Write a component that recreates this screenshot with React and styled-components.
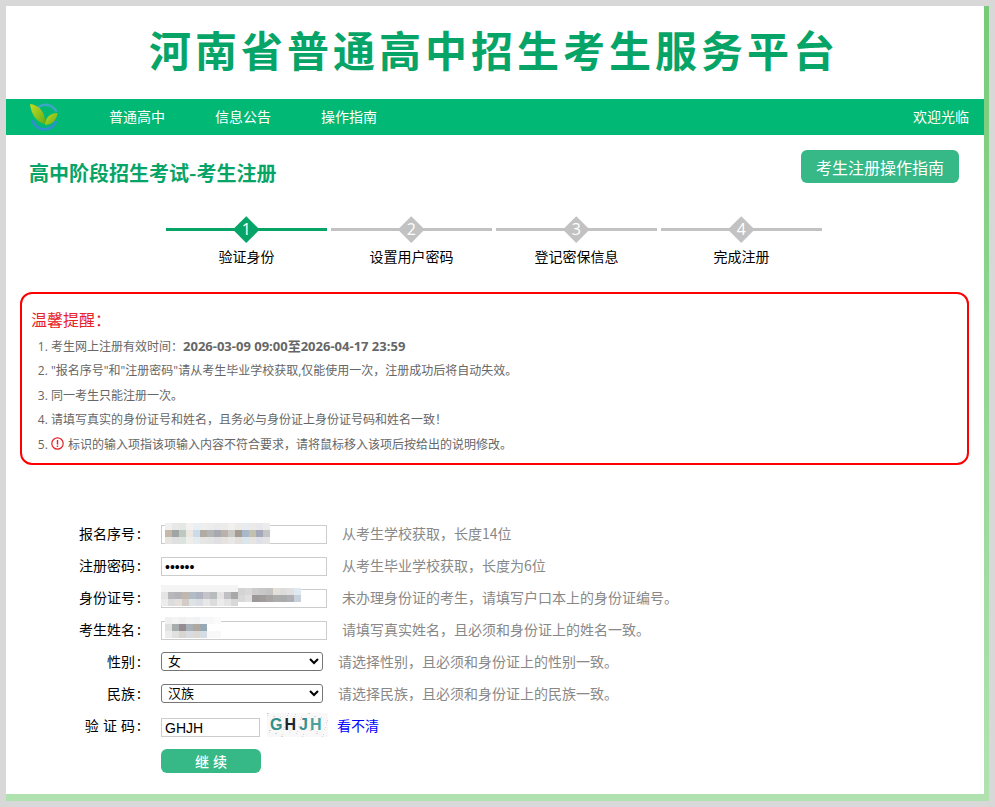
import styled, { createGlobalStyle } from "styled-components";

const GlobalStyle = createGlobalStyle`
  html, body {
    margin: 0;
    padding: 0;
    background: #d8d8d8;
  }
  body {
    font-family: "Open Sans", "Noto Sans CJK SC", sans-serif;
    color: #000;
  }
  * {
    box-sizing: border-box;
  }
`;

const Page = styled.div`
  padding: 6px 6px 6px 6px;
  height: 807px;
  overflow: hidden;
`;

const Frame = styled.div`
  width: 983px;
  height: 795px;
  background: #fff;
  border-right: 5px solid #7ccc7c;
  border-bottom: 7px solid #aee0ae;
  border-image: linear-gradient(#76cb76, #b0e2b0) 1;
`;

const Banner = styled.h1`
  margin: 0;
  height: 93px;
  padding: 0 2px 8px 0;
  display: flex;
  align-items: center;
  justify-content: center;
  font-family: "Noto Sans CJK SC", sans-serif;
  font-size: 42px;
  font-weight: 700;
  letter-spacing: 4px;
  color: #07a468;
`;

const Nav = styled.nav`
  height: 36px;
  background: #02b875;
  display: flex;
  align-items: center;
  padding: 0 15px 0 23px;
  color: #fff;
  font-size: 14px;
  font-family: "Noto Sans CJK SC", sans-serif;
`;

const NavLinks = styled.div`
  display: flex;
  gap: 50px;
  margin: 0 0 2px 50px;
  flex: 1;
`;

const Welcome = styled.span`
  margin-bottom: 2px;
`;

const TitleRow = styled.div`
  height: 48px;
  display: flex;
  justify-content: space-between;
  align-items: flex-start;
  padding: 15px 25px 0 23px;
`;

const PageTitle = styled.h2`
  margin: 8px 0 0;
  font-size: 20px;
  line-height: 30px;
  font-weight: 700;
  color: #07a468;
  font-family: "Noto Sans CJK SC", sans-serif;
`;

const GuideButton = styled.a`
  width: 158px;
  height: 33px;
  display: flex;
  align-items: center;
  justify-content: center;
  background: #36b887;
  border-radius: 6px;
  color: #fff;
  font-size: 16px;
  font-family: "Noto Sans CJK SC", sans-serif;
`;

const Steps = styled.div`
  display: flex;
  gap: 4px;
  margin: 33px 0 0 160px;
`;

const Step = styled.div`
  width: 161px;
  display: flex;
  flex-direction: column;
  align-items: center;
`;

const Track = styled.div`
  position: relative;
  width: 100%;
  height: 27px;
  display: flex;
  align-items: center;
  justify-content: center;
  &::before {
    content: "";
    position: absolute;
    left: 0;
    right: 0;
    top: 12px;
    height: 3px;
    background: ${(p) => (p.$active ? "#07a468" : "#c2c2c2")};
  }
`;

const Diamond = styled.div`
  position: relative;
  width: 18.5px;
  height: 18.5px;
  transform: rotate(45deg);
  background: ${(p) => (p.$active ? "#07a468" : "#c2c2c2")};
`;

const StepNumber = styled.span`
  position: absolute;
  inset: 0;
  display: flex;
  align-items: center;
  justify-content: center;
  color: #fff;
  font-size: 16px;
  transform: rotate(-45deg);
`;

const StepLabel = styled.div`
  margin-top: 3px;
  line-height: 20px;
  font-size: 14px;
  font-family: "Noto Sans CJK SC", sans-serif;
`;

const Notice = styled.div`
  margin: 26px 0 0 14px;
  width: 949px;
  height: 173px;
  border: 2px solid #f00;
  border-radius: 12px;
  padding: 13px 0 0 9px;
`;

const NoticeTitle = styled.div`
  font-size: 16px;
  line-height: 24px;
  color: #e8232a;
  font-family: "Noto Sans CJK SC", sans-serif;
`;

const NoticeList = styled.ol`
  margin: 4px 0 0;
  padding: 0 0 0 20px;
  font-size: 12px;
  color: #666;
  li {
    height: 24.4px;
    line-height: 24.4px;
  }
  li:first-child {
    height: 25.4px;
    margin-top: -1px;
  }
  b {
    font-size: 13px;
    color: #666;
  }
`;

const ErrorMark = styled.svg`
  width: 13px;
  height: 13px;
  vertical-align: -1px;
  margin-right: 4px;
`;

const Form = styled.form`
  margin-top: 52px;
`;

const Row = styled.div`
  height: 32px;
  display: flex;
  align-items: center;
`;

const Label = styled.label`
  width: 135px;
  margin-right: 20px;
  text-align: right;
  font-size: 14px;
  font-family: "Noto Sans CJK SC", sans-serif;
  word-spacing: 1px;
  white-space: pre;
`;

const Colon = styled.span`
  margin-left: 2px;
`;

const Field = styled.div`
  position: relative;
  width: 166px;
  height: 19px;
  margin-top: -2px;
`;

const CodeField = styled.div`
  width: 99px;
  height: 19px;
`;

const Input = styled.input`
  width: 100%;
  height: 100%;
  border: 1px solid #ccc;
  padding: 0 3px;
  font-size: 14px;
  font-family: "Liberation Sans", sans-serif;
  outline: none;
  background: #fff;
  color: #000;
`;

const Mosaic = styled.svg`
  position: absolute;
  left: ${(p) => p.$left}px;
  top: ${(p) => p.$top}px;
  display: block;
`;

const Select = styled.select`
  width: 162px;
  height: 19px;
  border: 1px solid #767676;
  border-radius: 3px;
  background: #fff;
  padding: 0 0 0 2px;
  font-size: 13px;
  font-family: "Liberation Sans", "Noto Sans CJK SC", sans-serif;
  color: #000;
`;

const Hint = styled.span`
  margin-left: 15px;
  font-size: 14px;
  color: #888;
  font-family: "Noto Sans CJK SC", sans-serif;
`;

const Captcha = styled.div`
  position: relative;
  width: 61px;
  height: 24px;
  margin-left: 7px;
  padding-left: 3px;
  display: flex;
  align-items: center;
  gap: 2px;
  background: #f8f8f8;
  font-family: "Liberation Sans", sans-serif;
  font-size: 16px;
  font-weight: 700;
`;

const CaptchaNoise = styled.svg`
  position: absolute;
  left: 0;
  top: 0;
`;

const CaptchaChar = styled.span`
  position: relative;
  margin-left: ${(p) => p.$gap || 0}px;
  color: ${(p) => p.$color};
`;

const RefreshLink = styled.a`
  margin-left: 9px;
  color: #00f;
  font-size: 14px;
  font-family: "Noto Sans CJK SC", sans-serif;
`;

const SubmitRow = styled.div`
  margin: 8px 0 0 155px;
`;

const SubmitButton = styled.button`
  width: 100px;
  height: 24px;
  border: 0;
  border-radius: 6px;
  background: #36b887;
  color: #fff;
  font-size: 14px;
  font-weight: 500;
  word-spacing: 1px;
  font-family: "Noto Sans CJK SC", sans-serif;
  padding: 0;
`;

function Logo() {
  return (
    <svg width="30" height="28" viewBox="0 0 30 28">
      <defs>
        <linearGradient id="leaf" x1="0" y1="0" x2="1" y2="1">
          <stop offset="0" stopColor="#c8dc20" />
          <stop offset="1" stopColor="#5fae1c" />
        </linearGradient>
      </defs>
      <path d="M9 4.5A12 12 0 0 1 27.5 9" fill="none" stroke="#3fa5c8" strokeWidth="2.4" />
      <path d="M3.5 17A12.2 12.2 0 0 0 27 18" fill="none" stroke="#2f8fd0" strokeWidth="2.8" />
      <path d="M1 1C9 2 17 8 16 21C8 20 2 11 1 1Z" fill="url(#leaf)" />
      <path d="M28.5 10C22 10 16 14 16 22C23 22 28 17 28.5 10Z" fill="url(#leaf)" />
    </svg>
  );
}

function Blur({ rows, left, top, size = 7 }) {
  return (
    <Mosaic
      $left={left}
      $top={top}
      width={rows[0].length * size}
      height={rows.length * size}
      shapeRendering="crispEdges"
    >
      {rows.map((row, y) =>
        row.map((c, x) => (
          <rect key={x + "-" + y} x={x * size} y={y * size} width={size} height={size} fill={c} />
        ))
      )}
    </Mosaic>
  );
}

function Noise() {
  const dots = [];
  const colors = ["#e4c8d0", "#c4dcd0", "#d4d4e4", "#e8dcc8"];
  for (let i = 0; i < 70; i++) {
    dots.push(
      <rect
        key={i}
        x={(i * 37) % 61}
        y={(i * 13 + (i % 5)) % 24}
        width="1"
        height="1"
        fill={colors[i % 4]}
      />
    );
  }
  return (
    <CaptchaNoise width="61" height="24" shapeRendering="crispEdges">
      {dots}
    </CaptchaNoise>
  );
}

const seqBlur = [
  ["#f2f0ee", "#e8e8e8", "#e4e8e4", "#f4f2f0", "#e8f0f6", "#eeeeee", "#ececec", "#eaeaec", "#ecebea", "#f0f0ee", "#ecebe8", "#e8ecf0", "#eceae8", "#e8e8ec", "#ececec"],
  ["#c4b8a8", "#a0a4a4", "#bcc8c0", "#ece8e0", "#c8dcec", "#b0aca4", "#b4b4b4", "#a8a8b0", "#bcb0ac", "#c8c8c4", "#a49c90", "#a8b8c8", "#c4c0b0", "#a4a8b8", "#c4c4c4"],
  ["#e8e4e0", "#e0e0e0", "#dce4e0", "#f0eeea", "#e4ecf2", "#e8e6e4", "#e4e4e4", "#e0e0e4", "#e6e2e0", "#e8e8e6", "#e2dfdc", "#dce4ec", "#e8e4e0", "#e0e0e8", "#e4e4e4"],
];
const idBlur = [
  Array(11).fill("#f4f4f4"),
  ["#e4e4e4", "#b8b8bc", "#b4b4b8", "#c0b8b0", "#b0bcc8", "#b0b4c0", "#c4c4c8", "#b8bcbc", "#e4e4e4", "#c0c0c4", "#a8a8a8"],
  ["#ececec", "#dcdcdc", "#e4e0dc", "#d4ccc8", "#dce4e8", "#dcdce4", "#e8e8e8", "#dcdcdc", "#ececec", "#e4e4e4", "#d8d8d8"],
];
const idBlurRight = [
  ["#d4d4d4", "#d8d8d8", "#cccccc", "#c8c8c8", "#c4c4c4", "#e4e0d8", "#dcdcdc", "#e0e0e0", "#e0e8f0"],
  ["#d8d8d8", "#e0e0e0", "#9c9898", "#a09c9c", "#a8a4a4", "#acacac", "#a8acac", "#b0b0b4", "#c8d0dc"],
];
const nameBlur = [
  ["#f0f0f0", "#f4f4f4", "#f0f0f0", "#f4f4f4", "#f0f2f4", "#f8f8f8", "#f8f8f8", "#fbfbfb"],
  ["#e0e0e0", "#a8acac", "#948c90", "#a8b0b8", "#b0a89c", "#98a8b4", "#ffffff", "#ffffff"],
  ["#ececec", "#e0e0e0", "#d8d4d0", "#d8dce0", "#dcd8d4", "#d4dce4", "#f8f8f8", "#f8f8f8"],
];

const steps = ["验证身份", "设置用户密码", "登记密保信息", "完成注册"];

export default function App() {
  return (
    <Page>
      <GlobalStyle />
      <Frame>
        <Banner>河南省普通高中招生考生服务平台</Banner>
        <Nav>
          <Logo />
          <NavLinks>
            <span>普通高中</span>
            <span>信息公告</span>
            <span>操作指南</span>
          </NavLinks>
          <Welcome>欢迎光临</Welcome>
        </Nav>

        <TitleRow>
          <PageTitle>高中阶段招生考试-考生注册</PageTitle>
          <GuideButton>考生注册操作指南</GuideButton>
        </TitleRow>

        <Steps>
          {steps.map((s, i) => (
            <Step key={s}>
              <Track $active={i === 0}>
                <Diamond $active={i === 0}>
                  <StepNumber>{i + 1}</StepNumber>
                </Diamond>
              </Track>
              <StepLabel>{s}</StepLabel>
            </Step>
          ))}
        </Steps>

        <Notice>
          <NoticeTitle>温馨提醒：</NoticeTitle>
          <NoticeList>
            <li>
              考生网上注册有效时间：<b>2026-03-09 09:00至2026-04-17 23:59</b>
            </li>
            <li>"报名序号"和"注册密码"请从考生毕业学校获取,仅能使用一次，注册成功后将自动失效。</li>
            <li>同一考生只能注册一次。</li>
            <li>请填写真实的身份证号和姓名，且务必与身份证上身份证号码和姓名一致！</li>
            <li>
              <ErrorMark viewBox="0 0 13 13">
                <circle cx="6.5" cy="6.5" r="5.7" fill="none" stroke="#e0242a" strokeWidth="1.2" />
                <rect x="5.8" y="3" width="1.4" height="4.6" fill="#e0242a" />
                <rect x="5.8" y="8.6" width="1.4" height="1.4" fill="#e0242a" />
              </ErrorMark>
              标识的输入项指该项输入内容不符合要求，请将鼠标移入该项后按给出的说明修改。
            </li>
          </NoticeList>
        </Notice>

        <Form>
          <Row>
            <Label>报名序号<Colon>:</Colon></Label>
            <Field>
              <Input readOnly />
              <Blur rows={seqBlur} left={4} top={0} />
            </Field>
            <Hint>从考生学校获取，长度14位</Hint>
          </Row>
          <Row>
            <Label>注册密码<Colon>:</Colon></Label>
            <Field>
              <Input type="password" value="123456" readOnly />
            </Field>
            <Hint>从考生毕业学校获取，长度为6位</Hint>
          </Row>
          <Row>
            <Label>身份证号<Colon>:</Colon></Label>
            <Field>
              <Input readOnly />
              <Blur rows={idBlur} left={0} top={-2} />
              <Blur rows={idBlurRight} left={77} top={1} />
            </Field>
            <Hint>未办理身份证的考生，请填写户口本上的身份证编号。</Hint>
          </Row>
          <Row>
            <Label>考生姓名<Colon>:</Colon></Label>
            <Field>
              <Input readOnly />
              <Blur rows={nameBlur} left={4} top={-2} />
            </Field>
            <Hint>请填写真实姓名，且必须和身份证上的姓名一致。</Hint>
          </Row>
          <Row>
            <Label>性别<Colon>:</Colon></Label>
            <Select defaultValue="女">
              <option>男</option>
              <option>女</option>
            </Select>
            <Hint>请选择性别，且必须和身份证上的性别一致。</Hint>
          </Row>
          <Row>
            <Label>民族<Colon>:</Colon></Label>
            <Select defaultValue="汉族">
              <option>汉族</option>
              <option>回族</option>
            </Select>
            <Hint>请选择民族，且必须和身份证上的民族一致。</Hint>
          </Row>
          <Row>
            <Label>验 证 码<Colon>:</Colon></Label>
            <CodeField>
              <Input value="GHJH" readOnly />
            </CodeField>
            <Captcha>
              <Noise />
              <CaptchaChar $color="#2f8f8a">G</CaptchaChar>
              <CaptchaChar $color="#20242a">H</CaptchaChar>
              <CaptchaChar $color="#3a8f8f" $gap={1}>J</CaptchaChar>
              <CaptchaChar $color="#4aa09a">H</CaptchaChar>
            </Captcha>
            <RefreshLink>看不清</RefreshLink>
          </Row>
          <SubmitRow>
            <SubmitButton type="button">继 续</SubmitButton>
          </SubmitRow>
        </Form>
      </Frame>
    </Page>
  );
}
